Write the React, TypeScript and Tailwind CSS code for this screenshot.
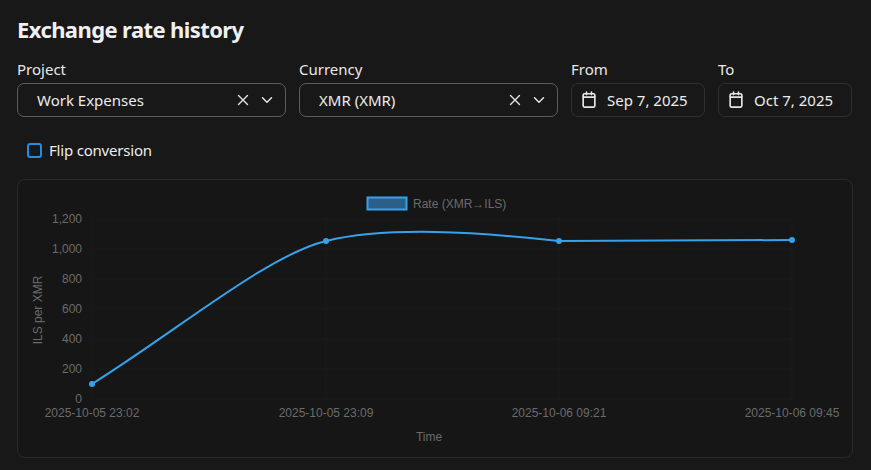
import React from "react";

const X = () => (
  <svg width="18" height="18" viewBox="0 0 24 24" fill="none" stroke="#e5e5e5" strokeWidth="1.8" strokeLinecap="round"><path d="M6 6l12 12M18 6L6 18" /></svg>
);
const Chev = () => (
  <svg width="18" height="18" viewBox="0 0 24 24" fill="none" stroke="#e5e5e5" strokeWidth="2" strokeLinecap="round" strokeLinejoin="round"><path d="M6 9l6 6 6-6" /></svg>
);
const Cal = () => (
  <svg width="20" height="22" viewBox="0 0 24 24" fill="none" stroke="#e5e5e5" strokeWidth="2"><rect x="5" y="4.5" width="14" height="16" rx="1.5" /><path d="M5 8.5h14M9 2.5v3M15 2.5v3" strokeLinecap="round" /></svg>
);

function Select({ label, value, w }: { label: string; value: string; w: string }) {
  return (
    <div className={`flex flex-col ${w}`}>
      <div className="text-[15px] text-[#e8e8e8] h-[28px] leading-[28px]">{label}</div>
      <div className="h-[34px] rounded-[7px] border border-[#5c5c5c] flex items-center pl-[19px] pr-[9px] text-[15px] text-[#ececec]">
        <span className="flex-1">{value}</span>
        <span className="flex items-center gap-[6px]"><X /><Chev /></span>
      </div>
    </div>
  );
}
function DateF({ label, value }: { label: string; value: string }) {
  return (
    <div className="flex flex-col w-[134px]">
      <div className="text-[15px] text-[#e8e8e8] h-[28px] leading-[28px]">{label}</div>
      <div className="h-[34px] rounded-[7px] border border-[#303030] flex items-center pl-[7px] gap-[8px] text-[15px] text-[#ececec]">
        <Cal /><span>{value}</span>
      </div>
    </div>
  );
}

export default function App() {
  const yt = [0, 200, 400, 600, 800, 1000, 1200];
  const xs = [74, 308, 541, 774];
  const xl = ["2025-10-05 23:02", "2025-10-05 23:09", "2025-10-06 09:21", "2025-10-06 09:45"];
  const pts: [number, number][] = [[74, 204], [308, 61], [541, 61], [774, 60]];
  return (
    <div className="w-[871px] h-[470px] bg-[#181818] px-[17px] pt-[12px] font-['Inter',sans-serif]">
      <h1 className="text-[22px] font-bold text-[#f0f0f0] tracking-[-0.6px] h-[34px] leading-[34px]">Exchange rate history</h1>
      <div className="flex gap-[13px] mt-[9px]">
        <Select label="Project" value="Work Expenses" w="w-[269px]" />
        <Select label="Currency" value="XMR (XMR)" w="w-[259px]" />
        <DateF label="From" value="Sep 7, 2025" />
        <DateF label="To" value="Oct 7, 2025" />
      </div>
      <div className="flex items-center gap-[7px] mt-[24px] ml-[10px] h-[18px]">
        <div className="w-[15px] h-[15px] border-2 border-[#1e8ee6] rounded-[3px]" />
        <span className="text-[15px] text-[#ececec] tracking-[-0.2px]">Flip conversion</span>
      </div>
      <div className="mt-[20px] w-[836px] h-[279px] rounded-[8px] border border-[#2a2a2a] bg-[#161616] relative">
        <svg width="836" height="279" className="absolute left-0 top-0" style={{ fontFamily: "'Liberation Sans', Arial, sans-serif" }}>
          {yt.map((v) => {
            const y = 219 - (v / 200) * 30;
            return (
              <g key={v}>
                <line x1="74" x2="774" y1={y} y2={y} stroke="#1b1b1b" />
                <text x="64" y={y + 4} fontSize="12" fill="#6b6b6b" textAnchor="end">{v.toLocaleString("en-US")}</text>
              </g>
            );
          })}
          {xs.map((x, i) => (
            <g key={i}>
              <line x1={x} x2={x} y1="39" y2="219" stroke="#1b1b1b" />
              <text x={x} y="237" fontSize="12" fill="#6b6b6b" textAnchor="middle">{xl[i]}</text>
            </g>
          ))}
          <text x="411" y="261" fontSize="12" fill="#6b6b6b" textAnchor="middle">Time</text>
          <text transform="translate(24,130) rotate(-90)" fontSize="12" fill="#6b6b6b" textAnchor="middle">ILS per XMR</text>
          <rect x="349.5" y="17.5" width="39" height="12" fill="#2c5f86" stroke="#36a2eb" strokeWidth="2" />
          <text x="395" y="28" fontSize="12" fill="#6b6b6b">Rate (XMR→ILS)</text>
          <path d="M74,204 C160,150 250,75 308,61 C370,46 460,52 541,61 L774,60" fill="none" stroke="#36a2eb" strokeWidth="2" />
          {pts.map(([x, y], i) => <circle key={i} cx={x} cy={y} r="3" fill="#36a2eb" />)}
        </svg>
      </div>
    </div>
  );
}
